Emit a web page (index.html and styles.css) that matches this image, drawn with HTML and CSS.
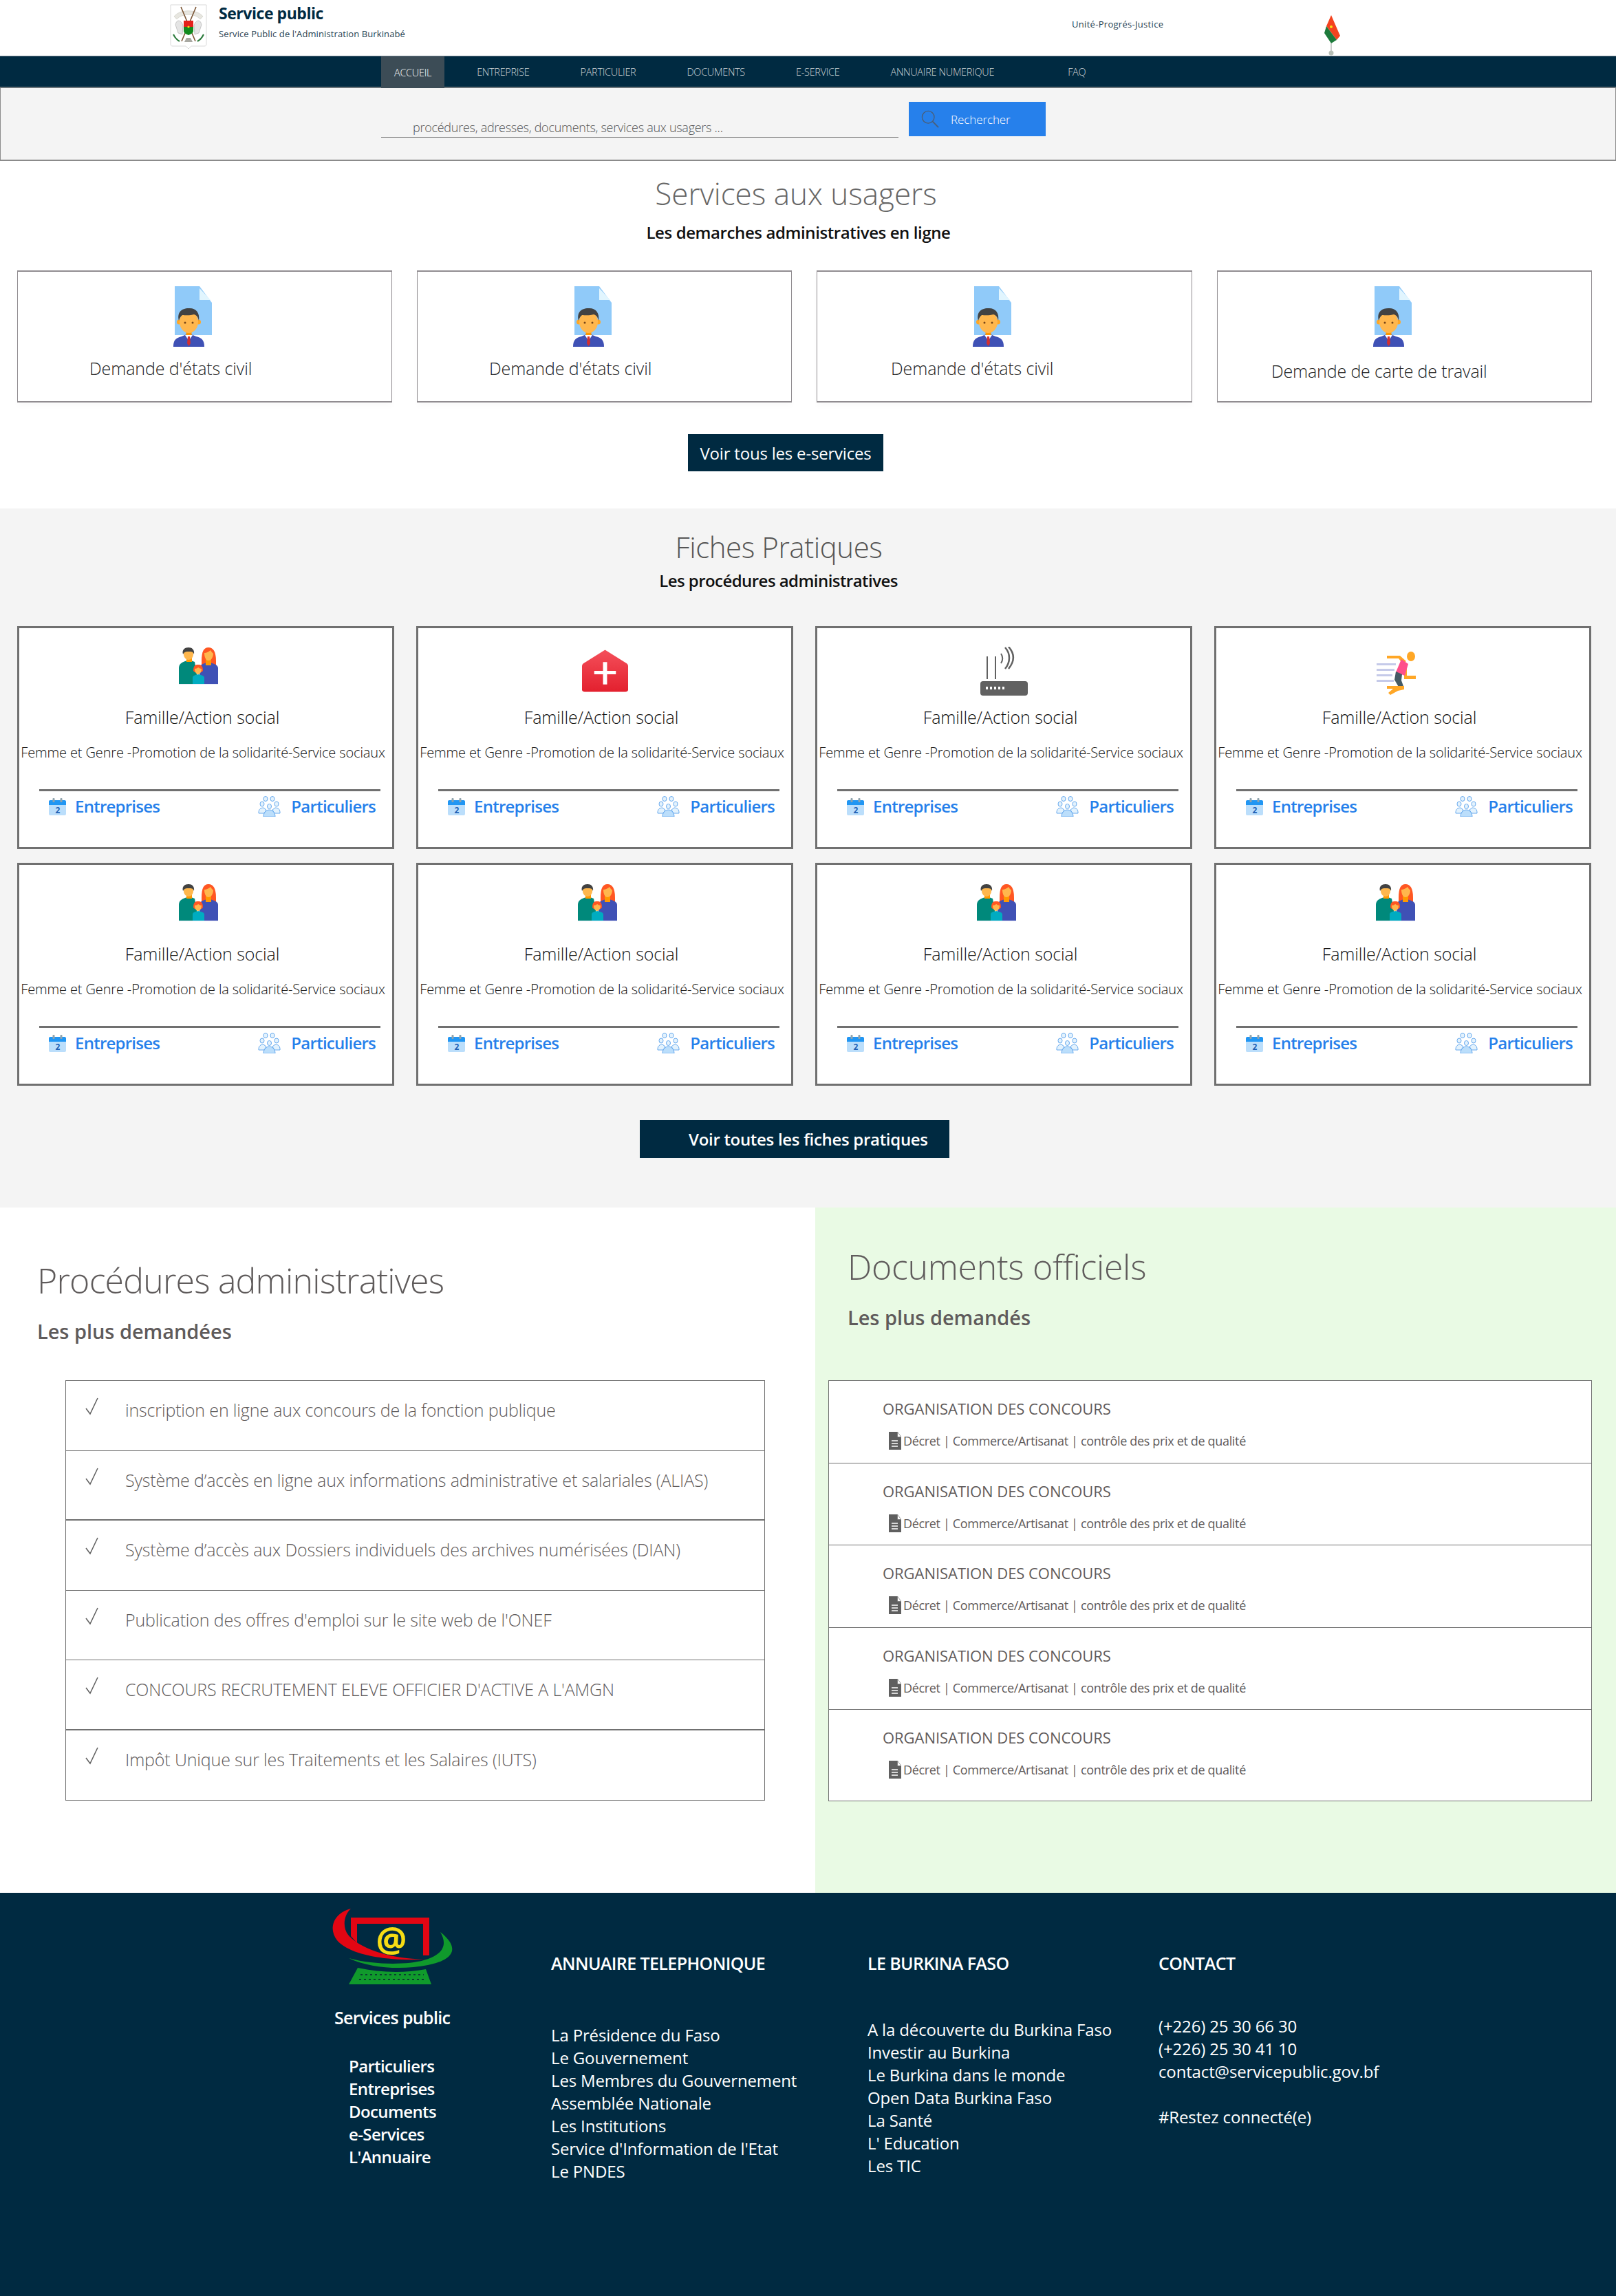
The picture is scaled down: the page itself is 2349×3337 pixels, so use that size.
FILE: index.html
```html
<!DOCTYPE html>
<html lang="fr">
<head>
<meta charset="utf-8">
<title>Service public</title>
<link rel="stylesheet" href="styles.css">
</head>
<body>
<svg class="defs" width="0" height="0" aria-hidden="true">
  <defs>
    <symbol id="i-doc" viewBox="0 0 58 90">
      <path d="M2 0H38L56 24V71H2z" fill="#90caf9"/>
      <path d="M38 3V20H54z" fill="#e1f5fe"/>
      <path d="M0 88C0 78 4 75 12 73L19 70H26L33 73C41 75 45 78 45 88z" fill="#3f51b5"/>
      <path d="M17 71L22.500 79L28 71z" fill="#fff"/>
      <path d="M21 73H24L25 83L22.500 87L20 83z" fill="#d32f2f"/>
      <rect x="18.500" y="60" width="8" height="11" fill="#ff9800"/>
      <circle cx="8.500" cy="52" r="3.500" fill="#ffa726"/>
      <circle cx="36.500" cy="52" r="3.500" fill="#ffa726"/>
      <ellipse cx="22.500" cy="52" rx="13.500" ry="16" fill="#ffb74d"/>
      <path d="M8 50C5 38 12 32 22 32C32 31 39 38 37 50C36 45 34 42 30 41C24 43 16 42 13 42C10 44 9 47 8 50z" fill="#424242"/>
      <circle cx="17" cy="53" r="1.500" fill="#784719"/>
      <circle cx="28" cy="53" r="1.500" fill="#784719"/>
    </symbol>
    <symbol id="i-family" viewBox="0 0 57 54">
      <path d="M0 53V30C0 24 4 22 9 20L15 18L23 21L26 38V53z" fill="#00897b"/>
      <rect x="11" y="11" width="8" height="10" fill="#ff9800"/>
      <path d="M7 7C7 1 21 1 21 7V10C21 15 17 18 14 18C11 18 7 15 7 10z" fill="#ffb74d"/>
      <path d="M6 10C4 3 9 0 14 0C19 0 23 3 22 10C21 6 18 6 14 6C11 6 8 6 6 10z" fill="#424242"/>
      <path d="M33 29V20C33 6 36 0 43 0C50 0 54 6 54 20V26L46 28z" fill="#ff5722"/>
      <path d="M30 53V30C30 25 35 24 43 21C51 24 57 25 57 30V53z" fill="#3f51b5"/>
      <rect x="39" y="16" width="8" height="10" fill="#ff9800"/>
      <path d="M37 8C40 8 44 6 46 4C47 6 49 8 50 9C50 14 47 19 43 19C39 19 37 14 37 8z" fill="#ffb74d"/>
      <path d="M20 54V44C20 41 24 40 28 39C32 40 37 41 37 44V54z" fill="#00acc1"/>
      <path d="M21 34C21 26 24 25 28 25C32 25 35 26 35 34L33 36H23z" fill="#ff5722"/>
      <path d="M23 31C25 31 27 30 28 29C30 30 31 31 33 31C33 35 31 39 28 39C25 39 23 35 23 31z" fill="#ffb74d"/>
      <rect x="0" y="53" width="57" height="1" fill="#e8eaf6"/>
    </symbol>
    <symbol id="i-hospital" viewBox="0 0 68 62">
      <defs><linearGradient id="g-red" x1="0" y1="0" x2="0" y2="1"><stop offset="0" stop-color="#f44f5a"/><stop offset="1" stop-color="#e3202e"/></linearGradient></defs>
      <path d="M34 0L66 20C67 21 68 22 68 24V59C68 61 66 62 64 62H4C2 62 0 61 0 59V24C0 22 1 21 2 20z" fill="url(#g-red)"/>
      <path d="M31 18H37V31H50V36H37V51H31V36H18V31H31z" fill="#fff"/>
    </symbol>
    <symbol id="i-router" viewBox="0 0 69 71">
      <g fill="none" stroke="#616161" stroke-width="2">
        <path d="M10 14V47M22 14V47"/>
        <path d="M30 24C33 20 33 14 30 10"/>
        <path d="M36 32C44 22 44 10 36 1" stroke-width="2.500"/>
        <path d="M41 32C50 21 50 10 41 0" stroke-width="2.500"/>
      </g>
      <rect x="0" y="50" width="69" height="21" rx="4" fill="#616161"/>
      <g fill="#fff"><rect x="8" y="58" width="3" height="4"/><rect x="14" y="58" width="3" height="4"/><rect x="20" y="58" width="3" height="4"/><rect x="26" y="58" width="3" height="4"/><rect x="32" y="58" width="3" height="4"/></g>
    </symbol>
    <symbol id="i-runner" viewBox="0 0 59 63">
      <g fill="#c5cae9"><rect x="0" y="17" width="28" height="3"/><rect x="0" y="25" width="26" height="3"/><rect x="0" y="33" width="23" height="3"/><rect x="0" y="41" width="25" height="3"/></g>
      <ellipse cx="50" cy="7" rx="6" ry="7" fill="#ffa726"/>
      <path d="M15 6H34L43 14L38 18L32 10H15z" fill="#ffa726"/>
      <path d="M44 25V35H57V40H40V25z" fill="#ffa726"/>
      <path d="M36 11L46 18L41 35L28 30z" fill="#ff4f8b"/>
      <path d="M28 29L37 33L36 42L40 53L33 53L26 41z" fill="#455a64"/>
      <path d="M15 50H40V55L31 57L20 63L17 60L24 54H15z" fill="#ffa726"/>
    </symbol>
    <symbol id="i-cal" viewBox="0 0 25 25">
      <rect x="0" y="3" width="25" height="22" rx="2" fill="#bbdefb"/>
      <path d="M0 10V5C0 4 1 3 2 3H23C24 3 25 4 25 5V10z" fill="#2196f3"/>
      <rect x="5.500" y="0" width="3" height="6" rx="1" fill="#90a4ae"/>
      <rect x="16.500" y="0" width="3" height="6" rx="1" fill="#90a4ae"/>
      <text x="12.500" y="21.500" text-anchor="middle" class="cal-num">2</text>
    </symbol>
    <symbol id="i-people" viewBox="0 0 33 30">
      <g fill="#e3f2fd" stroke="#64a8ee" stroke-width="1">
        <ellipse cx="11" cy="4" rx="3" ry="3.500"/><ellipse cx="21" cy="4" rx="3" ry="3.500"/>
        <ellipse cx="6" cy="11.500" rx="3" ry="3.500"/><ellipse cx="27" cy="11.500" rx="3" ry="3.500"/>
        <ellipse cx="16.500" cy="15" rx="3" ry="3.500"/>
        <path d="M1 24C1 19 4 17 8 17L12 20L9 25H1z"/>
        <path d="M32 24C32 19 29 17 25 17L21 20L24 25H32z"/>
      </g>
      <path d="M8 30C8 24 12 20 16.500 20C21 20 25 24 25 30z" fill="#bbdefb" stroke="#64a8ee"/>
    </symbol>
    <symbol id="i-file" viewBox="0 0 18 26">
      <path d="M0 0H12L18 8V26H0z" fill="#5f5f5f"/>
      <path d="M12.500 0L18 7.500H12.500z" fill="#fff" stroke="#5f5f5f" stroke-width=".6"/>
      <path d="M4 13H13M4 17H13M4 21H13" stroke="#fff" stroke-width="1.300"/>
    </symbol>
    <symbol id="i-check" viewBox="0 0 22 26">
      <path d="M2 16L8 24L19 1" fill="none" stroke="#5f5f5f" stroke-width="1.500"/>
    </symbol>
  </defs>
</svg>

<header class="masthead">
  <div class="brand">
    <svg class="arms" viewBox="0 0 54 66" role="img" aria-label="Armoiries du Burkina Faso">
      <path d="M1 1H53V58C53 60 52 61 50 61H31L27 65L23 61H4C2 61 1 60 1 58z" fill="#fff" stroke="#d9d9d9"/>
      <path d="M6 18C14 7 40 7 48 18L44 22C36 13 18 13 10 22z" fill="#e7e6e0" stroke="#c9c9c0" stroke-width=".6"/>
      <path d="M16 4L37 54M38 4L17 54" stroke="#7a5434" stroke-width="1.600"/>
      <path d="M8 30C10 20 18 24 19 32L18 44L12 42z" fill="#e4e4e4" stroke="#aaa" stroke-width=".6"/>
      <path d="M46 30C44 20 36 24 35 32L36 44L42 42z" fill="#e4e4e4" stroke="#aaa" stroke-width=".6"/>
      <path d="M20 24H34V33H20z" fill="#e3201b"/>
      <path d="M20 33H34V39C34 42 30 44 27 45C24 44 20 42 20 39z" fill="#128a1e"/>
      <circle cx="27" cy="33" r="1.600" fill="#f7d417"/>
      <path d="M5 44C8 50 10 52 14 54M49 44C46 50 44 52 40 54" stroke="#2f7d3f" stroke-width="2.200" fill="none"/>
      <path d="M21 55L24 49H30L33 55z" fill="#a9a9a2"/>
    </svg>
    <div class="brand-text">
      <p class="brand-name">Service public</p>
      <p class="brand-sub">Service Public de l'Administration Burkinabé</p>
    </div>
  </div>
  <p class="motto">Unité-Progrés-Justice</p>
  <svg class="flag" viewBox="0 0 26 62" role="img" aria-label="Drapeau du Burkina Faso">
    <path d="M12 2L25 32L20 38L5 18z" fill="#f4431f"/>
    <path d="M5 18L20 38L12 43L2 28z" fill="#1d7a3b"/>
    <circle cx="12" cy="19" r="2" fill="#f7e017"/>
    <path d="M12 43V54" stroke="#999" stroke-width="1"/>
    <circle cx="12" cy="57" r="3.500" fill="#b7bfb7"/>
  </svg>
</header>

<nav class="mainnav">
  <a class="nav-link nav-active">ACCUEIL</a>
  <a class="nav-link">ENTREPRISE</a>
  <a class="nav-link">PARTICULIER</a>
  <a class="nav-link">DOCUMENTS</a>
  <a class="nav-link">E-SERVICE</a>
  <a class="nav-link">ANNUAIRE NUMERIQUE</a>
  <a class="nav-link nav-faq">FAQ</a>
</nav>

<section class="searchbar">
  <div class="search-input">procédures, adresses, documents, services aux usagers ...</div>
  <button class="search-btn">
    <svg class="search-icon" viewBox="0 0 28 28"><circle cx="11" cy="11" r="9.500" fill="none" stroke="#4a5e78" stroke-width="1.400"/><path d="M18 18L27 27" stroke="#4a5e78" stroke-width="2"/></svg>
    <span>Rechercher</span>
  </button>
</section>

<section class="services">
  <h2 class="services-title">Services aux usagers</h2>
  <p class="services-sub">Les demarches administratives en ligne</p>
  <div class="service-grid">
    <article class="service-card"><svg class="service-icon"><use href="#i-doc"/></svg><p class="service-name">Demande d'états civil</p></article>
    <article class="service-card"><svg class="service-icon"><use href="#i-doc"/></svg><p class="service-name">Demande d'états civil</p></article>
    <article class="service-card"><svg class="service-icon"><use href="#i-doc"/></svg><p class="service-name service-name-c">Demande d'états civil</p></article>
    <article class="service-card"><svg class="service-icon"><use href="#i-doc"/></svg><p class="service-name service-name-d">Demande de carte de travail</p></article>
  </div>
  <div class="cta-row cta-services"><a class="cta cta-small">Voir tous les e-services</a></div>
</section>

<section class="fiches">
  <h2 class="fiches-title">Fiches Pratiques</h2>
  <p class="fiches-sub">Les procédures administratives</p>
  <div class="fiche-grid">
    <article class="fiche">
      <div class="fiche-icon"><svg class="ic-family"><use href="#i-family"/></svg></div>
      <h3 class="fiche-name">Famille/Action social</h3>
      <p class="fiche-desc">Femme et Genre -Promotion de la solidarité-Service sociaux</p>
      <div class="fiche-links"><a class="fiche-link"><svg class="ic-cal"><use href="#i-cal"/></svg>Entreprises</a><a class="fiche-link"><svg class="ic-people"><use href="#i-people"/></svg>Particuliers</a></div>
    </article>
    <article class="fiche">
      <div class="fiche-icon"><svg class="ic-hospital"><use href="#i-hospital"/></svg></div>
      <h3 class="fiche-name">Famille/Action social</h3>
      <p class="fiche-desc">Femme et Genre -Promotion de la solidarité-Service sociaux</p>
      <div class="fiche-links"><a class="fiche-link"><svg class="ic-cal"><use href="#i-cal"/></svg>Entreprises</a><a class="fiche-link"><svg class="ic-people"><use href="#i-people"/></svg>Particuliers</a></div>
    </article>
    <article class="fiche">
      <div class="fiche-icon"><svg class="ic-router"><use href="#i-router"/></svg></div>
      <h3 class="fiche-name">Famille/Action social</h3>
      <p class="fiche-desc">Femme et Genre -Promotion de la solidarité-Service sociaux</p>
      <div class="fiche-links"><a class="fiche-link"><svg class="ic-cal"><use href="#i-cal"/></svg>Entreprises</a><a class="fiche-link"><svg class="ic-people"><use href="#i-people"/></svg>Particuliers</a></div>
    </article>
    <article class="fiche">
      <div class="fiche-icon"><svg class="ic-runner"><use href="#i-runner"/></svg></div>
      <h3 class="fiche-name">Famille/Action social</h3>
      <p class="fiche-desc">Femme et Genre -Promotion de la solidarité-Service sociaux</p>
      <div class="fiche-links"><a class="fiche-link"><svg class="ic-cal"><use href="#i-cal"/></svg>Entreprises</a><a class="fiche-link"><svg class="ic-people"><use href="#i-people"/></svg>Particuliers</a></div>
    </article>
    <article class="fiche">
      <div class="fiche-icon"><svg class="ic-family"><use href="#i-family"/></svg></div>
      <h3 class="fiche-name">Famille/Action social</h3>
      <p class="fiche-desc">Femme et Genre -Promotion de la solidarité-Service sociaux</p>
      <div class="fiche-links"><a class="fiche-link"><svg class="ic-cal"><use href="#i-cal"/></svg>Entreprises</a><a class="fiche-link"><svg class="ic-people"><use href="#i-people"/></svg>Particuliers</a></div>
    </article>
    <article class="fiche">
      <div class="fiche-icon"><svg class="ic-family"><use href="#i-family"/></svg></div>
      <h3 class="fiche-name">Famille/Action social</h3>
      <p class="fiche-desc">Femme et Genre -Promotion de la solidarité-Service sociaux</p>
      <div class="fiche-links"><a class="fiche-link"><svg class="ic-cal"><use href="#i-cal"/></svg>Entreprises</a><a class="fiche-link"><svg class="ic-people"><use href="#i-people"/></svg>Particuliers</a></div>
    </article>
    <article class="fiche">
      <div class="fiche-icon"><svg class="ic-family"><use href="#i-family"/></svg></div>
      <h3 class="fiche-name">Famille/Action social</h3>
      <p class="fiche-desc">Femme et Genre -Promotion de la solidarité-Service sociaux</p>
      <div class="fiche-links"><a class="fiche-link"><svg class="ic-cal"><use href="#i-cal"/></svg>Entreprises</a><a class="fiche-link"><svg class="ic-people"><use href="#i-people"/></svg>Particuliers</a></div>
    </article>
    <article class="fiche">
      <div class="fiche-icon"><svg class="ic-family"><use href="#i-family"/></svg></div>
      <h3 class="fiche-name">Famille/Action social</h3>
      <p class="fiche-desc">Femme et Genre -Promotion de la solidarité-Service sociaux</p>
      <div class="fiche-links"><a class="fiche-link"><svg class="ic-cal"><use href="#i-cal"/></svg>Entreprises</a><a class="fiche-link"><svg class="ic-people"><use href="#i-people"/></svg>Particuliers</a></div>
    </article>
  </div>
  <div class="cta-row cta-fiches"><a class="cta cta-large">Voir toutes les fiches pratiques</a></div>
</section>

<section class="split">
  <div class="procedures">
    <h2 class="split-title">Procédures administratives</h2>
    <p class="split-sub">Les plus demandées</p>
    <ul class="proc-list">
      <li class="proc-item"><svg class="ic-check"><use href="#i-check"/></svg>inscription en ligne aux concours de la fonction publique</li>
      <li class="proc-item proc-thick"><svg class="ic-check"><use href="#i-check"/></svg>Système d’accès en ligne aux informations administrative et salariales (ALIAS)</li>
      <li class="proc-item"><svg class="ic-check"><use href="#i-check"/></svg>Système d’accès aux Dossiers individuels des archives numérisées (DIAN)</li>
      <li class="proc-item"><svg class="ic-check"><use href="#i-check"/></svg>Publication des offres d'emploi sur le site web de l'ONEF</li>
      <li class="proc-item proc-thick"><svg class="ic-check"><use href="#i-check"/></svg>CONCOURS RECRUTEMENT ELEVE OFFICIER D'ACTIVE A L'AMGN</li>
      <li class="proc-item"><svg class="ic-check"><use href="#i-check"/></svg>Impôt Unique sur les Traitements et les Salaires (IUTS)</li>
    </ul>
  </div>
  <div class="documents">
    <h2 class="split-title doc-title">Documents officiels</h2>
    <p class="split-sub doc-sub">Les plus demandés</p>
    <ul class="doc-list">
      <li class="doc-item"><p class="doc-name">ORGANISATION DES CONCOURS</p><p class="doc-meta"><svg class="ic-file"><use href="#i-file"/></svg>Décret | Commerce/Artisanat | contrôle des prix et de qualité</p></li>
      <li class="doc-item"><p class="doc-name">ORGANISATION DES CONCOURS</p><p class="doc-meta"><svg class="ic-file"><use href="#i-file"/></svg>Décret | Commerce/Artisanat | contrôle des prix et de qualité</p></li>
      <li class="doc-item"><p class="doc-name">ORGANISATION DES CONCOURS</p><p class="doc-meta"><svg class="ic-file"><use href="#i-file"/></svg>Décret | Commerce/Artisanat | contrôle des prix et de qualité</p></li>
      <li class="doc-item"><p class="doc-name">ORGANISATION DES CONCOURS</p><p class="doc-meta"><svg class="ic-file"><use href="#i-file"/></svg>Décret | Commerce/Artisanat | contrôle des prix et de qualité</p></li>
      <li class="doc-item"><p class="doc-name">ORGANISATION DES CONCOURS</p><p class="doc-meta"><svg class="ic-file"><use href="#i-file"/></svg>Décret | Commerce/Artisanat | contrôle des prix et de qualité</p></li>
    </ul>
  </div>
</section>

<footer class="footer">
  <div class="foot-col foot-brand">
    <svg class="foot-logo" viewBox="0 0 180 110" role="img" aria-label="Services public">
      <path d="M28 0C4 6 -6 28 8 46C24 66 80 78 145 73C100 76 44 62 24 38C16 28 17 10 28 0z" fill="#e30613"/>
      <path d="M28 13H142V68H133V22H37V50L28 40z" fill="#e30613"/>
      <text x="87" y="63" text-anchor="middle" class="logo-at">@</text>
      <path d="M158 34C186 56 180 74 140 82C100 90 55 86 25 72C60 82 110 82 134 75C160 68 170 54 158 34z" fill="#109a2c"/>
      <path d="M25 110L38 86C70 93 105 94 137 88L145 110z" fill="#109a2c"/>
      <path d="M42 96H134M40 103H136" stroke="#0a3d30" stroke-width="2" stroke-dasharray="3 4"/>
    </svg>
    <p class="foot-brandname">Services public</p>
    <ul class="foot-menu">
      <li>Particuliers</li><li>Entreprises</li><li>Documents</li><li>e-Services</li><li>L'Annuaire</li>
    </ul>
  </div>
  <div class="foot-col foot-annuaire">
    <h4 class="foot-head">ANNUAIRE TELEPHONIQUE</h4>
    <ul class="foot-list">
      <li>La Présidence du Faso</li><li>Le Gouvernement</li><li>Les Membres du Gouvernement</li><li>Assemblée Nationale</li><li>Les Institutions</li><li>Service d'Information de l'Etat</li><li>Le PNDES</li>
    </ul>
  </div>
  <div class="foot-col foot-burkina">
    <h4 class="foot-head">LE BURKINA FASO</h4>
    <ul class="foot-list">
      <li>A la découverte du Burkina Faso</li><li>Investir au Burkina</li><li>Le Burkina dans le monde</li><li>Open Data Burkina Faso</li><li>La Santé</li><li>L' Education</li><li>Les TIC</li>
    </ul>
  </div>
  <div class="foot-col foot-contact">
    <h4 class="foot-head">CONTACT</h4>
    <ul class="foot-list">
      <li>(+226) 25 30 66 30</li><li>(+226) 25 30 41 10</li><li>contact@servicepublic.gov.bf</li><li class="foot-gap">#Restez connecté(e)</li>
    </ul>
  </div>
</footer>
</body>
</html>
```

FILE: styles.css
```css
* { box-sizing: border-box; }
html, body { margin: 0; padding: 0; }
body {
  width: 2349px;
  font-family: "Open Sans", "Noto Sans", sans-serif;
  background: #fff;
  color: #222;
}
p, h2, h3, h4, ul { margin: 0; padding: 0; }
ul { list-style: none; }
.defs { position: absolute; }
.cal-num { font: 700 12px "Open Sans", sans-serif; fill: #1f5fb4; }
.logo-at { font: 700 50px "Open Sans", sans-serif; fill: #f5dc14; }

/* Masthead */
.masthead { height: 81px; display: flex; align-items: flex-start; }
.brand { display: flex; width: 700px; margin-left: 247px; padding-top: 6px; }
.arms { width: 54px; height: 66px; }
.brand-text { margin-left: 17px; }
.brand-name { font-size: 23px; font-weight: 700; line-height: 30px; margin-top: -2px; color: #002a41; letter-spacing: -.45px; }
.brand-sub { font-size: 13px; line-height: 18px; margin-top: 6px; color: #1f3f52; letter-spacing: .1px; }
.motto { margin-left: 611px; margin-top: 26px; font-size: 13px; line-height: 18px; color: #1f3f52; letter-spacing: .3px; width: 140px; }
.flag { width: 26px; height: 62px; margin-left: 225px; margin-top: 20px; }

/* Nav */
.mainnav {
  height: 47px;
  background: #002a41;
  border-top: 1px solid #5d7180;
  border-bottom: 2px solid #6a7378;
  padding-left: 554px;
  display: flex;
  align-items: stretch;
}
.nav-link {
  display: flex;
  align-items: center;
  padding: 0 37px;
  font-size: 14.500px;
  font-weight: 300;
  color: #cfd4d6;
  letter-spacing: -.3px;
}
.nav-active { padding: 0 19px; margin-right: 10px; background: #3c4c56; color: #fff; height: 46px; }
.nav-faq { margin-left: 33px; }

/* Search */
.searchbar {
  height: 106px;
  background: #f4f4f4;
  border: 1px solid #8b8b8b;
  border-top: 0;
  border-bottom-width: 2px;
  padding-left: 553px;
  display: flex;
  align-items: flex-start;
}
.search-input {
  width: 752px;
  height: 72px;
  padding: 44px 0 0 46px;
  border-bottom: 1px solid #777;
  font-size: 18px;
  line-height: 26px;
  font-weight: 300;
  color: #555;
  letter-spacing: -.27px;
}
.search-btn {
  width: 199px;
  height: 50px;
  margin: 20px 0 0 15px;
  background: #2680eb;
  border: 0;
  padding: 0 0 0 18px;
  display: flex;
  align-items: center;
  color: #fff;
  font-family: inherit;
  font-size: 17px;
  font-weight: 300;
  letter-spacing: -.1px;
}
.search-icon { width: 26px; height: 26px; margin-right: 17px; }

/* Services */
.services { height: 505px; padding-top: 19px; }
.services-title { text-align: center; font-weight: 300; font-size: 44px; line-height: 56px; color: #666; padding-right: 35px; }
.services-sub { text-align: center; font-size: 24px; font-weight: 600; line-height: 34px; margin-top: 12px; color: #111; letter-spacing: -.4px; padding-right: 28px; }
.service-grid {
  display: grid;
  grid-template-columns: 545px 545px 546px 545px;
  gap: 36px;
  margin: 38px 0 0 25px;
}
.service-card {
  height: 192px;
  background: #fff;
  border: 1px solid #908c90;
  border-top-width: 2px;
  border-bottom-width: 2px;
  box-shadow: 0 6px 8px rgba(0,0,0,.02);
  padding-top: 21px;
}
.service-icon { display: block; width: 58px; height: 90px; margin-left: 226px; }
.service-name { font-size: 25px; line-height: 34px; margin: 12px 0 0 104px; color: #222; letter-spacing: -.1px; font-weight: 300; }
.service-name-c { margin-left: 107px; }
.service-name-d { margin: 16px 0 0 78px; letter-spacing: -.15px; }
.cta-row { display: flex; }
.cta-services { padding: 46px 0 0 1000px; }
.cta { background: #002a41; color: #fff; display: flex; align-items: center; }
.cta-small { width: 284px; height: 54px; justify-content: center; font-size: 24px; letter-spacing: -.2px; }

/* Fiches */
.fiches { height: 1016px; background: #f4f4f4; padding-top: 27px; }
.fiches-title { text-align: center; font-weight: 300; font-size: 42px; line-height: 58px; color: #555; padding-right: 85px; letter-spacing: -.45px; }
.fiches-sub { text-align: center; font-size: 24px; font-weight: 600; line-height: 34px; margin-top: 3px; color: #111; letter-spacing: -.55px; padding-right: 86px; }
.fiche-grid {
  display: grid;
  grid-template-columns: repeat(4, 548px);
  gap: 20px 32px;
  margin: 49px 0 0 25px;
}
.fiche {
  height: 324px;
  background: #fff;
  border: 3px solid #707070;
  padding-top: 28px;
}
.fiche-icon { height: 72px; display: flex; justify-content: center; }
.ic-family { width: 57px; height: 54px; margin: 0 22px 0 0; }
.ic-hospital { width: 67px; height: 62px; margin: 3px 0 0 0; }
.ic-router { width: 69px; height: 71px; margin: -1px 0 0 0; }
.ic-runner { width: 59px; height: 63px; margin: 6px 18px 0 0; }
.fiche-name { font-size: 25px; font-weight: 300; line-height: 34px; margin-top: 12px; text-align: center; color: #111; letter-spacing: -.1px; padding-right: 10px; }
.fiche-desc { font-size: 20px; font-weight: 300; line-height: 26px; margin-top: 22px; padding-right: 8px; text-align: center; color: #111; letter-spacing: -.14px; white-space: nowrap; }
.fiche-links {
  margin: 40px 17px 0 29px;
  border-top: 3px solid #707070;
  padding: 6px 7px 0 14px;
  display: flex;
  justify-content: space-between;
  align-items: flex-start;
}
.fiche-link { display: flex; align-items: center; font-size: 24px; font-weight: 600; line-height: 32px; color: #2680eb; letter-spacing: -.75px; height: 32px; }
.ic-cal { width: 25px; height: 25px; margin-right: 13px; }
.ic-people { width: 33px; height: 30px; margin-right: 15px; }
.cta-fiches { padding: 50px 0 0 930px; }
.cta-large { width: 450px; height: 55px; padding-left: 71px; font-size: 24px; font-weight: 600; letter-spacing: -.3px; }

/* Split */
.split { height: 996px; display: flex; }
.procedures { width: 1185px; padding: 75px 0 0 54px; background: #fff; }
.documents { flex: 1; padding: 55px 0 0 19px; background: #e9fae4; }
.split-title { font-size: 50px; font-weight: 300; line-height: 62px; color: #5f5b5b; letter-spacing: -.8px; }
.split-sub { font-size: 29px; font-weight: 600; line-height: 38px; margin-top: 24px; color: #5f5b5b; letter-spacing: -.05px; }
.doc-title { margin-left: 28px; letter-spacing: -.3px; }
.doc-sub { margin-left: 28px; }
.proc-list { width: 1017px; margin: 52px 0 0 41px; border: 1px solid #707070; background: #fff; }
.proc-item {
  height: 101.500px;
  padding: 25px 0 0 27px;
  display: flex;
  align-items: flex-start;
  font-size: 25px;
  font-weight: 300;
  line-height: 34px;
  color: #5f5b5b;
  letter-spacing: -.15px;
  border-bottom: 1px solid #707070;
}
.proc-item:last-child { border-bottom: 0; }
.proc-thick { border-bottom-width: 2px; }
.ic-check { width: 22px; height: 26px; margin: -1px 37px 0 0; flex: none; }
.doc-list { width: 1110px; margin: 72px 0 0 0; border: 1px solid #707070; background: #fff; }
.doc-item { height: 119.500px; padding: 25px 0 0 78px; border-bottom: 1px solid #707070; }
.doc-item:last-child { border-bottom: 0; height: 132px; }
.doc-name { font-size: 22px; font-weight: 400; line-height: 30px; color: #5f5b5b; letter-spacing: -.05px; }
.doc-meta { display: flex; align-items: center; font-size: 18px; font-weight: 400; line-height: 26px; margin: 19px 0 0 9px; color: #5f5b5b; letter-spacing: -.34px; }
.ic-file { width: 18px; height: 26px; margin-right: 3px; }

/* Footer */
.footer { height: 586px; background: #002a41; color: #fff; display: flex; align-items: flex-start; padding-left: 482px; }
.foot-col { flex: none; }
.foot-brand { width: 319px; padding-top: 23px; }
.foot-annuaire { width: 460px; }
.foot-burkina { width: 423px; }
.foot-logo { display: block; width: 180px; height: 110px; }
.foot-brandname { font-size: 25px; font-weight: 600; line-height: 34px; margin: 31px 0 0 4px; letter-spacing: -.65px; }
.foot-menu { margin: 37px 0 0 25px; font-size: 24px; font-weight: 600; line-height: 33px; letter-spacing: -.62px; }
.foot-head { font-size: 25px; font-weight: 600; line-height: 34px; padding-top: 85px; box-sizing: content-box; letter-spacing: -.6px; }
.foot-list { font-size: 24px; font-weight: 400; line-height: 33px; letter-spacing: -.15px; }
.foot-annuaire .foot-list { margin-top: 71px; }
.foot-burkina .foot-list { margin-top: 63px; }
.foot-contact .foot-list { margin-top: 58px; }
.foot-gap { margin-top: 33px; }
```
